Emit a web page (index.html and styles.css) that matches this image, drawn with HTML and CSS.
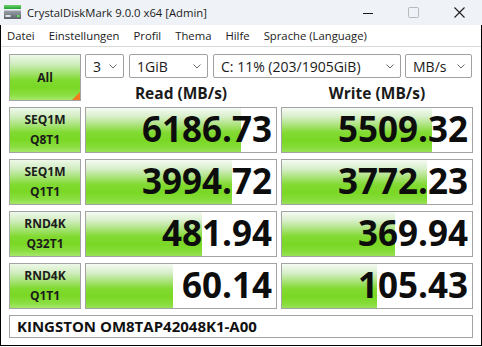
FILE: index.html
```html
<!DOCTYPE html>
<html lang="de">
<head>
<meta charset="utf-8">
<title>CrystalDiskMark 9.0.0 x64 [Admin]</title>
<link rel="stylesheet" href="styles.css">
</head>
<body>
<div class="titlebar">
  <svg class="appicon" width="18" height="15" viewBox="0 0 18 15">
    <defs>
      <linearGradient id="g1" x1="0" y1="0" x2="0" y2="1">
        <stop offset="0" stop-color="#6fd36a"/>
        <stop offset="1" stop-color="#23a236"/>
      </linearGradient>
      <linearGradient id="g2" x1="0" y1="0" x2="0" y2="1">
        <stop offset="0" stop-color="#9aa1a8"/>
        <stop offset="1" stop-color="#5d646c"/>
      </linearGradient>
    </defs>
    <rect x="0" y="0" width="17" height="4" fill="url(#g1)"/>
    <rect x="0" y="5.5" width="17" height="8.5" fill="url(#g2)"/>
    <rect x="1.5" y="10" width="5" height="2" fill="#dfe3e6"/>
    <rect x="13" y="10" width="2.5" height="2" fill="#5ee05a"/>
  </svg>
  <span class="title">CrystalDiskMark 9.0.0 x64 [Admin]</span>
  <div class="controls">
    <span class="ctl"><svg width="10" height="10" viewBox="0 0 10 10"><line x1="0" y1="5.5" x2="10" y2="5.5" stroke="#1b1b1b" stroke-width="1"/></svg></span>
    <span class="ctl"><svg width="11" height="11" viewBox="0 0 11 11"><rect x="0.5" y="0.5" width="10" height="10" rx="1" fill="none" stroke="#b9b9b9" stroke-width="1"/></svg></span>
    <span class="ctl"><svg width="11" height="11" viewBox="0 0 11 11"><path d="M0.5 0.5 L10.5 10.5 M10.5 0.5 L0.5 10.5" stroke="#1b1b1b" stroke-width="1.1" fill="none"/></svg></span>
  </div>
</div>
<div class="frame">
  <nav class="menu">
    <span>Datei</span><span>Einstellungen</span><span>Profil</span><span>Thema</span><span>Hilfe</span><span>Sprache (Language)</span>
  </nav>
  <main class="grid">
    <div class="btn green all">All<span class="corner"></span></div>
    <div class="topright">
      <div class="combos">
        <div class="combo c1"><span>3</span><svg class="chev" width="8" height="5" viewBox="0 0 8 5"><polyline points="0.5,0.5 4,4 7.5,0.5" fill="none" stroke="#6a6a6a" stroke-width="1"/></svg></div>
        <div class="combo c2"><span>1GiB</span><svg class="chev" width="8" height="5" viewBox="0 0 8 5"><polyline points="0.5,0.5 4,4 7.5,0.5" fill="none" stroke="#6a6a6a" stroke-width="1"/></svg></div>
        <div class="combo c3"><span>C: 11% (203/1905GiB)</span><svg class="chev" width="8" height="5" viewBox="0 0 8 5"><polyline points="0.5,0.5 4,4 7.5,0.5" fill="none" stroke="#6a6a6a" stroke-width="1"/></svg></div>
        <div class="combo c4"><span>MB/s</span><svg class="chev" width="8" height="5" viewBox="0 0 8 5"><polyline points="0.5,0.5 4,4 7.5,0.5" fill="none" stroke="#6a6a6a" stroke-width="1"/></svg></div>
      </div>
      <div class="heads"><div>Read (MB/s)</div><div>Write (MB/s)</div></div>
    </div>

    <div class="btn green label">SEQ1M<br>Q8T1</div>
    <div class="val" style="--w:155px">6186.73</div>
    <div class="val" style="--w:150px">5509.32</div>

    <div class="btn green label">SEQ1M<br>Q1T1</div>
    <div class="val" style="--w:146px">3994.72</div>
    <div class="val" style="--w:145px">3772.23</div>

    <div class="btn green label">RND4K<br>Q32T1</div>
    <div class="val" style="--w:116px">481.94</div>
    <div class="val" style="--w:113px">369.94</div>

    <div class="btn green label">RND4K<br>Q1T1</div>
    <div class="val" style="--w:87px">60.14</div>
    <div class="val" style="--w:95px">105.43</div>

    <div class="model">KINGSTON OM8TAP42048K1-A00</div>
  </main>
</div>
</body>
</html>
```

FILE: styles.css
```css
* { box-sizing: border-box; }

html, body {
  margin: 0;
  padding: 0;
  background: #ffffff;
}

body {
  width: 482px;
  height: 347px;
  overflow: hidden;
  font-family: "Open Sans", "Noto Sans", sans-serif;
  color: #1a1a1a;
}

.titlebar {
  height: 25px;
  background: #eff3f7;
  display: flex;
  align-items: center;
}

.appicon {
  margin-left: 4px;
  margin-right: 5px;
  flex: none;
}

.title {
  font-size: 11.3px;
  color: #1b1b1b;
  white-space: nowrap;
}

.controls {
  margin-left: auto;
  display: flex;
  height: 25px;
}

.ctl {
  width: 45.5px;
  display: flex;
  align-items: center;
  justify-content: center;
}

.frame {
  border: 1px solid #000;
  border-top: none;
}

.menu {
  height: 22px;
  border-bottom: 1px solid #d9d9d9;
  display: flex;
  align-items: center;
  gap: 14px;
  padding-left: 6px;
  font-size: 11.3px;
  color: #1b1b1b;
}

.grid {
  display: grid;
  grid-template-columns: 72px 192px 192px;
  grid-template-rows: 47px repeat(4, 46px) 23px;
  column-gap: 4px;
  row-gap: 6px;
  padding: 7px 8px 7px 8px;
}

.green {
  background: linear-gradient(180deg,
    #eef8e9 0%,
    #d0edbf 20%,
    #a4e272 40%,
    #80da30 56%,
    #7ad825 72%,
    #8ade40 88%,
    #a6e76c 100%);
}

.btn {
  border: 1px solid #a3a3a3;
  display: flex;
  align-items: center;
  justify-content: center;
  text-align: center;
  font-weight: 700;
  color: #1c1c1c;
}

.all {
  position: relative;
  font-size: 12px;
}

.corner {
  position: absolute;
  right: 0;
  bottom: 0;
  width: 0;
  height: 0;
  border-left: 8px solid transparent;
  border-bottom: 8px solid #f07a1c;
}

.label {
  font-size: 12px;
  line-height: 20px;
}

.topright {
  grid-column: 2 / 4;
  display: flex;
  flex-direction: column;
}

.combos {
  height: 24px;
  display: flex;
}

.combo {
  height: 24px;
  border: 1px solid #a0a0a0;
  border-radius: 2px;
  background: #fff;
  display: flex;
  align-items: center;
  justify-content: space-between;
  padding: 0 6px 0 7px;
  font-size: 14px;
  color: #1a1a1a;
  white-space: nowrap;
}

.chev { flex: none; margin-top: 1px; }

.c1 { width: 39px; }
.c2 { width: 79px; margin-left: 5px; }
.c3 { width: 188px; margin-left: 5px; }
.c4 { width: 67px; margin-left: 4px; }

.heads {
  margin-top: 6px;
  display: grid;
  grid-template-columns: 192px 192px;
  column-gap: 4px;
  font-size: 15.5px;
  font-weight: 700;
  line-height: 18px;
  text-align: center;
  color: #1a1a1a;
}

.val {
  border: 1px solid #a3a3a3;
  background-color: #fff;
  background-image: linear-gradient(180deg,
    #f6faf4 0%,
    #d8efca 20%,
    #a8e276 40%,
    #82da32 56%,
    #7ad825 74%,
    #86dc3a 90%,
    #98e256 100%);
  background-repeat: no-repeat;
  background-size: var(--w) 100%;
  display: flex;
  align-items: center;
  justify-content: flex-end;
  padding-right: 4px;
  padding-bottom: 3px;
  font-size: 35px;
  font-weight: 700;
  line-height: 1;
  color: #0d0d0d;
  white-space: nowrap;
}

.model {
  grid-column: 1 / 4;
  border: 1px solid #a3a3a3;
  background: #fff;
  font-size: 15px;
  font-weight: 700;
  line-height: 21px;
  padding-left: 7px;
  color: #111;
  white-space: nowrap;
}
```
